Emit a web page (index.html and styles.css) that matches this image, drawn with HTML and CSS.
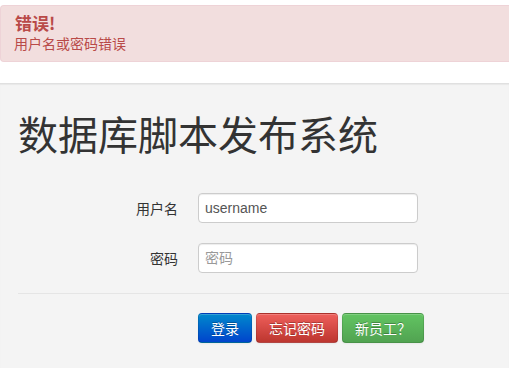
FILE: index.html
```html
<!DOCTYPE html>
<html lang="zh">
<head>
<meta charset="utf-8">
<title>数据库脚本发布系统</title>
<link rel="stylesheet" href="styles.css">
</head>
<body>
<div class="page">
  <div class="alert">
    <div class="alert-title">错误!</div>
    <div class="alert-text">用户名或密码错误</div>
  </div>
  <div class="well">
    <h1 class="title">数据库脚本发布系统</h1>
    <form class="form">
      <div class="row">
        <label class="label" for="u">用户名</label>
        <input class="input" id="u" type="text" value="username">
      </div>
      <div class="row">
        <label class="label" for="p">密码</label>
        <input class="input" id="p" type="password" placeholder="密码">
      </div>
      <div class="actions">
        <button type="button" class="btn btn-primary">登录</button>
        <button type="button" class="btn btn-danger">忘记密码</button>
        <button type="button" class="btn btn-success">新员工<span class="qmark">？</span></button>
      </div>
    </form>
  </div>
</div>
</body>
</html>
```
FILE: styles.css
```css
* { box-sizing: border-box; }
html, body { margin: 0; padding: 0; height: 100%; }
body {
  background: #fff;
  font-family: "Liberation Sans", "Noto Sans CJK SC", sans-serif;
  font-size: 14px;
  line-height: 20px;
  color: #333;
}
.page {
  display: flex;
  flex-direction: column;
  min-height: 100%;
  padding-top: 5px;
}
.alert {
  background: #f2dede;
  border: 1px solid #eed3d7;
  border-right: none;
  border-radius: 4px 0 0 4px;
  color: #b94a48;
  padding: 7px 14px 8px 13px;
  margin-bottom: 21px;
}
.alert-title {
  font-size: 17px;
  font-weight: bold;
  line-height: 20px;
  padding-left: 1px;
  font-family: "Noto Sans CJK SC", sans-serif;
}
.alert-text {
  font-size: 14px;
  line-height: 20px;
  font-family: "Noto Sans CJK SC", sans-serif;
}
.well {
  flex: 1;
  background: #f4f4f4;
  border-top: 1px solid #e0e0e0;
  box-shadow: inset 0 1px 1px rgba(0,0,0,0.05);
  padding: 29px 0 0 18px;
}
.title {
  margin: 0 0 40px 0;
  font-family: "Noto Sans CJK SC", sans-serif;
  font-weight: normal;
  font-size: 40px;
  line-height: 40px;
  color: #333;
}
.form { margin: 0; }
.row {
  display: flex;
  align-items: center;
  margin-bottom: 20px;
}
.label {
  width: 160px;
  margin-right: 20px;
  text-align: right;
  font-family: "Noto Sans CJK SC", sans-serif;
  font-size: 14px;
  color: #333;
}
.input {
  width: 220px;
  height: 30px;
  padding: 4px 6px;
  border: 1px solid #ccc;
  border-radius: 4px;
  background: #fff;
  font-family: "Liberation Sans", "Noto Sans CJK SC", sans-serif;
  font-size: 14px;
  color: #555;
  box-shadow: inset 0 1px 1px rgba(0,0,0,0.075);
  outline: none;
}
.input::placeholder { color: #999; }
.actions {
  border-top: 1px solid #e5e5e5;
  padding: 19px 0 0 180px;
  display: flex;
  gap: 4px;
}
.btn {
  height: 30px;
  padding: 4px 12px;
  font-family: "Noto Sans CJK SC", sans-serif;
  font-size: 14px;
  line-height: 20px;
  color: #fff;
  border: 1px solid rgba(0,0,0,0.1);
  border-bottom-color: rgba(0,0,0,0.25);
  border-radius: 4px;
  text-shadow: 0 -1px 0 rgba(0,0,0,0.25);
  box-shadow: inset 0 1px 0 rgba(255,255,255,0.2), 0 1px 2px rgba(0,0,0,0.05);
  cursor: pointer;
}
.qmark { font-family: "Noto Sans CJK TC", sans-serif; }
.btn-primary { background: linear-gradient(#0088cc, #0044cc); }
.btn-danger { background: linear-gradient(#ee5f5b, #bd362f); }
.btn-success { background: linear-gradient(#62c462, #51a351); }
```
